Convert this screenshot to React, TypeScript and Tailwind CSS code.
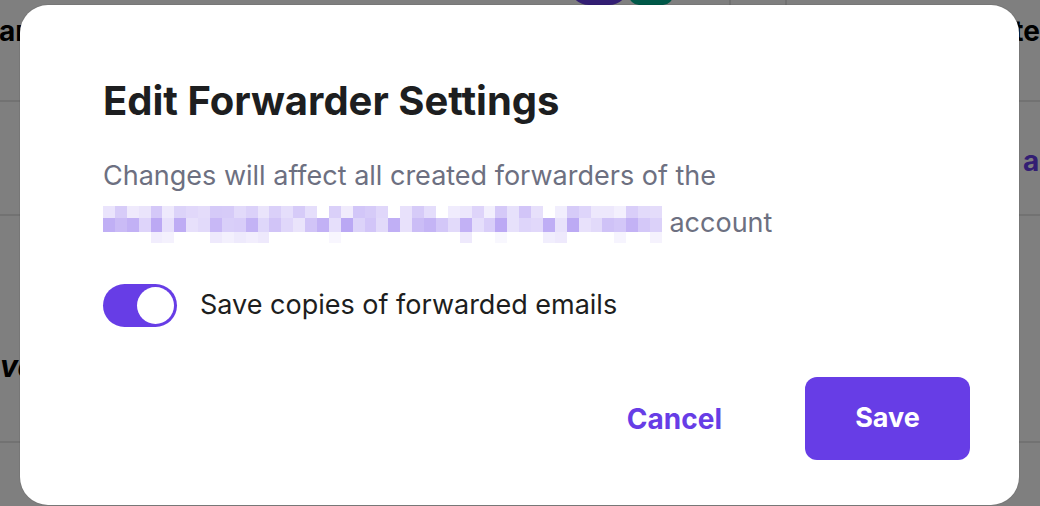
const rnd = (i: number) => {
  const x = Math.sin(i * 12.9898 + 78.233) * 43758.5453;
  return x - Math.floor(x);
};

const COLS = 47;
// pixelated (redacted) account name: three rows of mosaic cells
const MOSAIC = [
  { h: 12, min: 0.06, max: 0.3, fill: 0.9 },
  { h: 14, min: 0.14, max: 0.45, fill: 1 },
  { h: 11, min: 0.04, max: 0.12, fill: 0.3 },
].map((row, r) =>
  Array.from({ length: COLS }, (_, c) => {
    const on = rnd(r * 100 + c) < row.fill;
    const a = row.min + rnd(r * 100 + c + 500) * (row.max - row.min);
    return on ? a : 0;
  })
);

function Mosaic() {
  return (
    <span className="inline-flex flex-col align-middle">
      {MOSAIC.map((row, r) => (
        <span key={r} className="flex" style={{ height: [12, 14, 11][r] }}>
          {row.map((a, c) => (
            <span
              key={c}
              className="w-[11.9px] shrink-0"
              style={{ background: `rgba(103,61,230,${a})` }}
            />
          ))}
        </span>
      ))}
    </span>
  );
}

function Toggle() {
  return (
    <span className="flex h-[43px] w-[74px] shrink-0 items-center rounded-full bg-[#673de6] p-[3px]">
      <span className="ml-auto size-[37px] rounded-full bg-white" />
    </span>
  );
}

export default function App() {
  return (
    <div className="relative h-[506px] w-[1040px] overflow-hidden bg-white font-['Inter',sans-serif]">
      {/* page behind the dialog */}
      <div className="flex flex-col">
        <div className="flex h-[102px] border-b-2 border-[#e4e4e4]">
          <span className="-ml-[1px] w-[576px] pt-[10px] text-[28px] font-bold text-black">ar</span>
          <span className="-mt-[35px] h-[40px] w-[60px] rounded-full bg-[#673de6]" />
          <span className="-mt-[35px] h-[40px] w-[45px] rounded-b-[10px] bg-[#00b090]" />
          <span className="w-[56px]" />
          <span className="w-[57px] border-l-2 border-[#e4e4e4]" />
          <span className="flex-1 border-l-2 border-[#e4e4e4] pl-[226px] pt-[10px] text-[28px] font-bold text-black">
            te
          </span>
        </div>
        <div className="flex h-[114px] border-b-2 border-[#e4e4e4] pl-[1023px] pt-[38px]">
          <span className="text-[28px] font-bold text-[#673de6]">a</span>
        </div>
        <div className="flex h-[227px] border-b-2 border-[#e4e4e4] pt-[128px]">
          <span className="text-[30px] font-bold italic text-black">va</span>
        </div>
      </div>
      <div className="absolute inset-0 bg-black/50" />

      {/* dialog */}
      <div className="absolute left-[20px] top-[5px] flex h-[500px] w-[999px] flex-col rounded-[28px] bg-white pl-[83px] pr-[49px] pt-[72px] shadow-[0_0_0_1px_rgba(0,0,0,0.06)]">
        <h1 className="text-[40px] leading-[48px] font-bold text-[#1d1e20]">
          Edit Forwarder Settings
        </h1>
        <p className="mt-[27px] w-[700px] text-[27px] leading-[47px] text-[#6d7081]">
          Changes will affect all created forwarders of the
          <br />
          <Mosaic /> account
        </p>
        <div className="mt-[38px] flex items-center gap-[23px]">
          <Toggle />
          <span className="text-[27px] text-[#1d1e20]">Save copies of forwarded emails</span>
        </div>
        <div className="mt-[50px] flex items-center justify-end gap-[83px]">
          <button className="text-[28px] font-bold text-[#673de6]">Cancel</button>
          <button className="h-[83px] w-[165px] rounded-[12px] bg-[#673de6] text-[27px] font-bold text-white">
            Save
          </button>
        </div>
      </div>
    </div>
  );
}
